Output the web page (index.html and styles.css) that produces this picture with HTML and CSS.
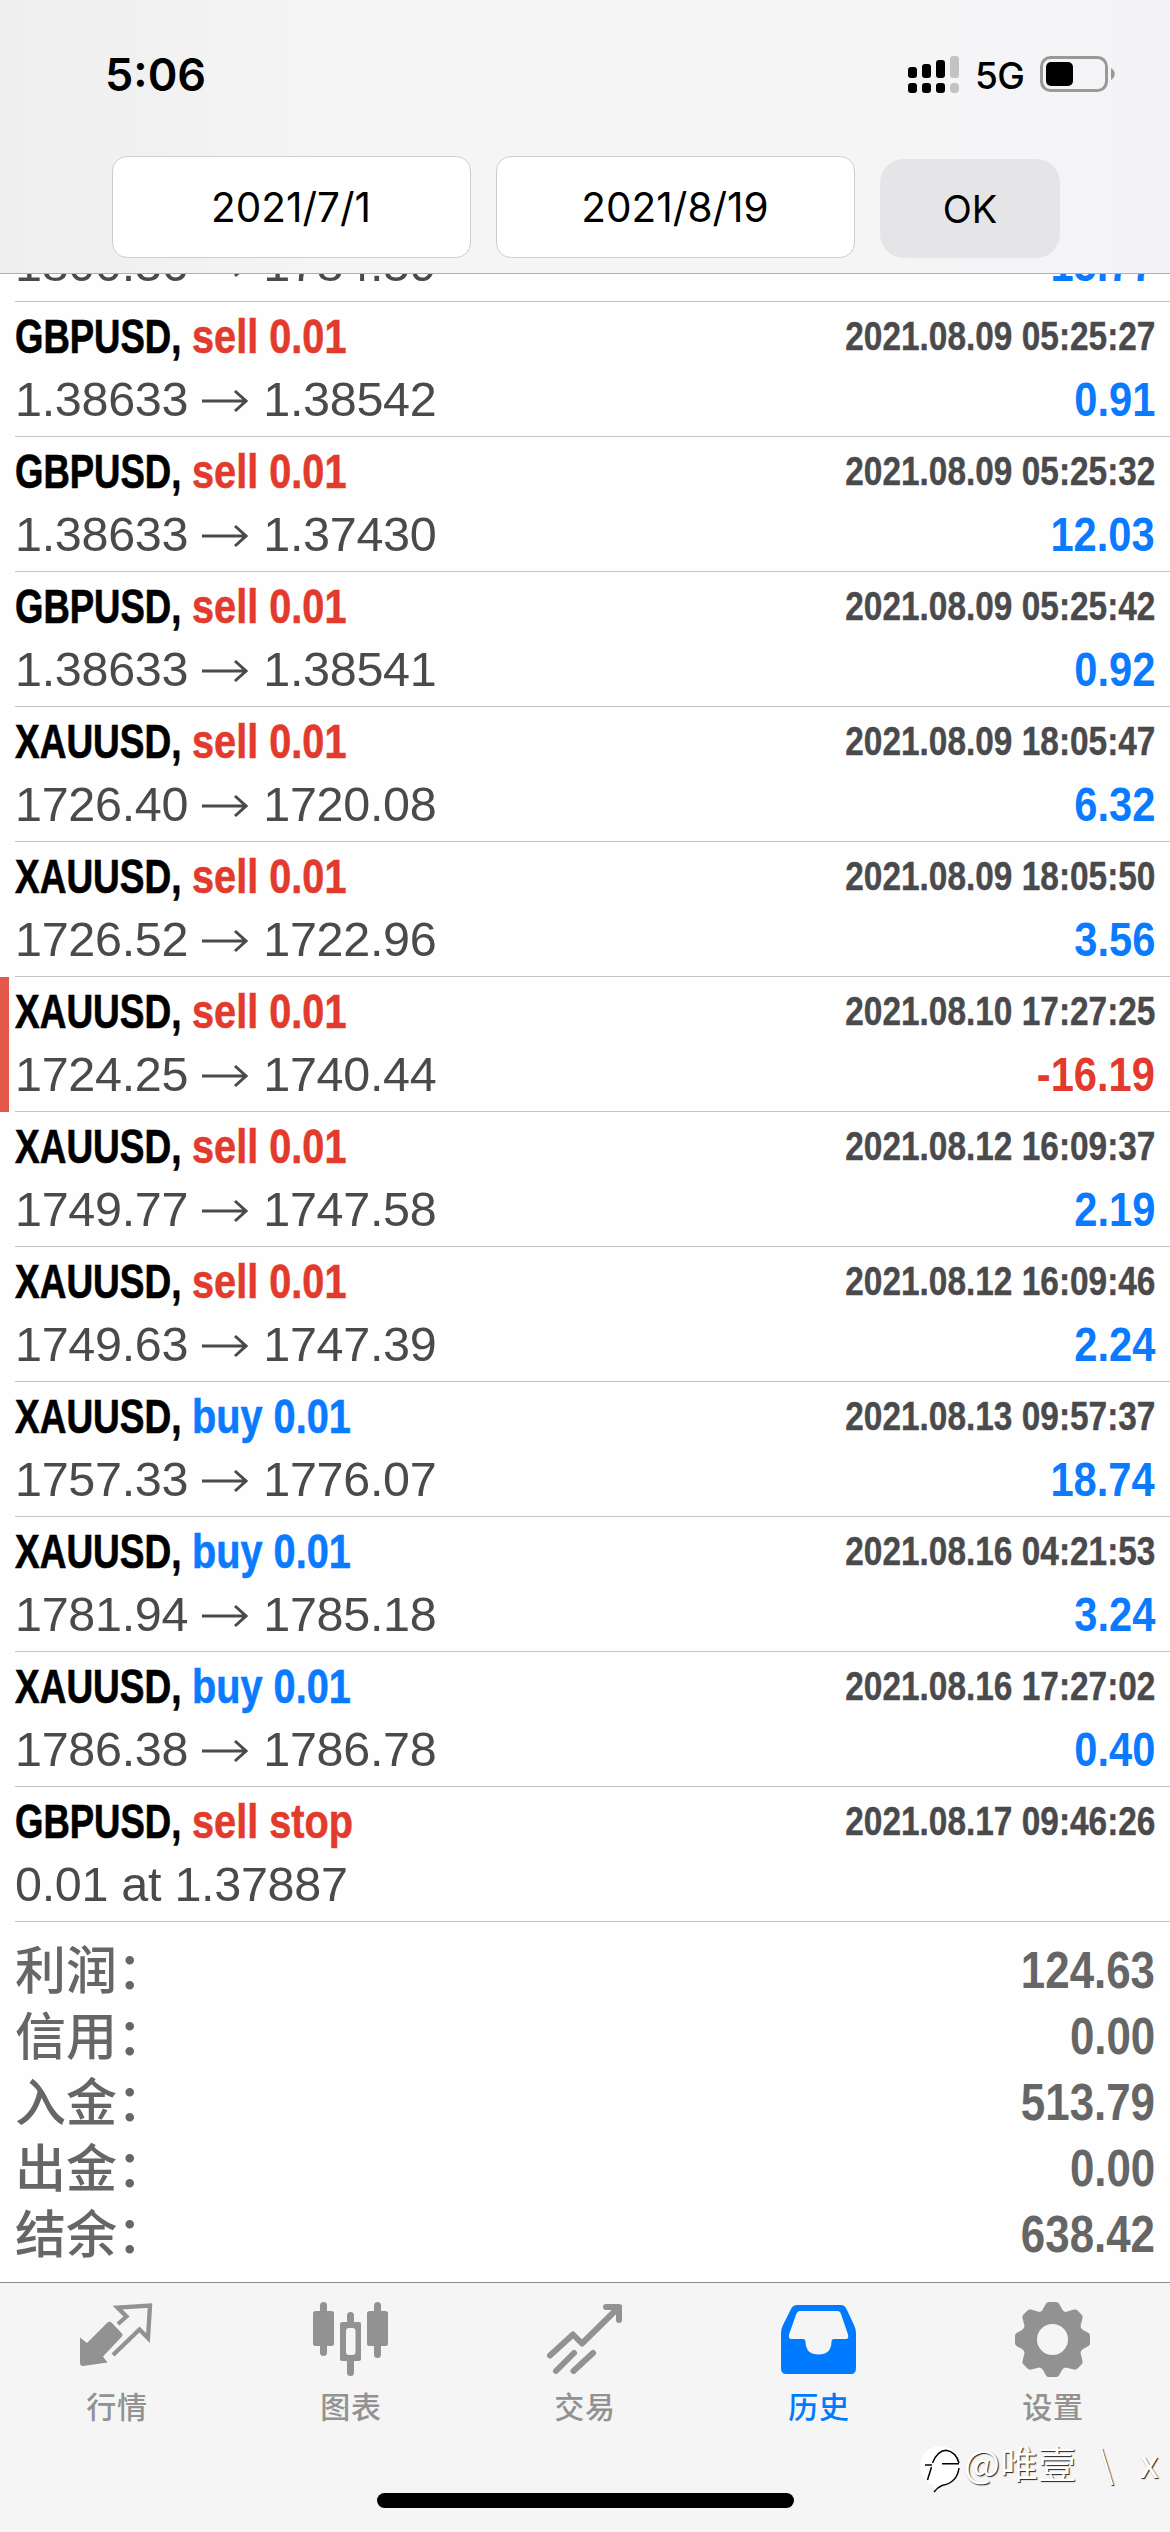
FILE: index.html
```html
<!DOCTYPE html>
<html lang="zh-CN">
<head>
<meta charset="utf-8">
<title>历史</title>
<link rel="stylesheet" href="styles.css">
</head>
<body>
<div class="screen">
  <header class="header">
    <div class="status">
      <span class="clock">5:06</span>
      <div class="status-icons">
        <svg class="signal" width="52" height="38" viewBox="0 0 52 38">
          <g fill="#000"><rect x="0" y="11" width="9" height="11" rx="3"/><rect x="14" y="8" width="9" height="14" rx="3"/><rect x="28" y="4" width="9" height="18" rx="3"/><rect x="0" y="27" width="9" height="10" rx="3"/><rect x="14" y="27" width="9" height="10" rx="3"/><rect x="28" y="27" width="9" height="10" rx="3"/></g>
          <g fill="#c3c3c3"><rect x="42" y="0" width="9" height="22" rx="3"/><rect x="42" y="27" width="9" height="10" rx="4"/></g>
        </svg>
        <span class="network">5G</span>
        <svg class="battery" width="76" height="38" viewBox="0 0 76 38">
          <rect x="1.5" y="1.5" width="65" height="33" rx="9" fill="none" stroke="#999" stroke-width="3"/>
          <rect x="6" y="6" width="27" height="24" rx="5" fill="#000"/>
          <path d="M71 12 C76 15 76 21 71 24 Z" fill="#999"/>
        </svg>
      </div>
    </div>
    <div class="filters">
      <div class="field">2021/7/1</div>
      <div class="field">2021/8/19</div>
      <div class="ok">OK</div>
    </div>
  </header>

  <main class="list">
    <div class="deal partial"><div class="deal-bottom"><span class="prices">1800.36<svg class="arrow" viewBox="0 0 46 24"><path d="M0 12H44M33 2L44 12L33 22"/></svg>1784.59</span><span class="profit">15.77</span></div></div>
    <div class="deal"><div class="deal-top"><span class="symbol">GBPUSD,</span><span class="side sell">sell 0.01</span><span class="time">2021.08.09 05:25:27</span></div><div class="deal-bottom"><span class="prices">1.38633<svg class="arrow" viewBox="0 0 46 24"><path d="M0 12H44M33 2L44 12L33 22"/></svg>1.38542</span><span class="profit">0.91</span></div></div>
    <div class="deal"><div class="deal-top"><span class="symbol">GBPUSD,</span><span class="side sell">sell 0.01</span><span class="time">2021.08.09 05:25:32</span></div><div class="deal-bottom"><span class="prices">1.38633<svg class="arrow" viewBox="0 0 46 24"><path d="M0 12H44M33 2L44 12L33 22"/></svg>1.37430</span><span class="profit">12.03</span></div></div>
    <div class="deal"><div class="deal-top"><span class="symbol">GBPUSD,</span><span class="side sell">sell 0.01</span><span class="time">2021.08.09 05:25:42</span></div><div class="deal-bottom"><span class="prices">1.38633<svg class="arrow" viewBox="0 0 46 24"><path d="M0 12H44M33 2L44 12L33 22"/></svg>1.38541</span><span class="profit">0.92</span></div></div>
    <div class="deal"><div class="deal-top"><span class="symbol xau">XAUUSD,</span><span class="side sell">sell 0.01</span><span class="time">2021.08.09 18:05:47</span></div><div class="deal-bottom"><span class="prices">1726.40<svg class="arrow" viewBox="0 0 46 24"><path d="M0 12H44M33 2L44 12L33 22"/></svg>1720.08</span><span class="profit">6.32</span></div></div>
    <div class="deal"><div class="deal-top"><span class="symbol xau">XAUUSD,</span><span class="side sell">sell 0.01</span><span class="time">2021.08.09 18:05:50</span></div><div class="deal-bottom"><span class="prices">1726.52<svg class="arrow" viewBox="0 0 46 24"><path d="M0 12H44M33 2L44 12L33 22"/></svg>1722.96</span><span class="profit">3.56</span></div></div>
    <div class="deal stopped"><div class="deal-top"><span class="symbol xau">XAUUSD,</span><span class="side sell">sell 0.01</span><span class="time">2021.08.10 17:27:25</span></div><div class="deal-bottom"><span class="prices">1724.25<svg class="arrow" viewBox="0 0 46 24"><path d="M0 12H44M33 2L44 12L33 22"/></svg>1740.44</span><span class="profit loss">-16.19</span></div></div>
    <div class="deal"><div class="deal-top"><span class="symbol xau">XAUUSD,</span><span class="side sell">sell 0.01</span><span class="time">2021.08.12 16:09:37</span></div><div class="deal-bottom"><span class="prices">1749.77<svg class="arrow" viewBox="0 0 46 24"><path d="M0 12H44M33 2L44 12L33 22"/></svg>1747.58</span><span class="profit">2.19</span></div></div>
    <div class="deal"><div class="deal-top"><span class="symbol xau">XAUUSD,</span><span class="side sell">sell 0.01</span><span class="time">2021.08.12 16:09:46</span></div><div class="deal-bottom"><span class="prices">1749.63<svg class="arrow" viewBox="0 0 46 24"><path d="M0 12H44M33 2L44 12L33 22"/></svg>1747.39</span><span class="profit">2.24</span></div></div>
    <div class="deal"><div class="deal-top"><span class="symbol xau">XAUUSD,</span><span class="side buy">buy 0.01</span><span class="time">2021.08.13 09:57:37</span></div><div class="deal-bottom"><span class="prices">1757.33<svg class="arrow" viewBox="0 0 46 24"><path d="M0 12H44M33 2L44 12L33 22"/></svg>1776.07</span><span class="profit">18.74</span></div></div>
    <div class="deal"><div class="deal-top"><span class="symbol xau">XAUUSD,</span><span class="side buy">buy 0.01</span><span class="time">2021.08.16 04:21:53</span></div><div class="deal-bottom"><span class="prices">1781.94<svg class="arrow" viewBox="0 0 46 24"><path d="M0 12H44M33 2L44 12L33 22"/></svg>1785.18</span><span class="profit">3.24</span></div></div>
    <div class="deal"><div class="deal-top"><span class="symbol xau">XAUUSD,</span><span class="side buy">buy 0.01</span><span class="time">2021.08.16 17:27:02</span></div><div class="deal-bottom"><span class="prices">1786.38<svg class="arrow" viewBox="0 0 46 24"><path d="M0 12H44M33 2L44 12L33 22"/></svg>1786.78</span><span class="profit">0.40</span></div></div>
    <div class="deal"><div class="deal-top"><span class="symbol">GBPUSD,</span><span class="side sell stop">sell stop</span><span class="time">2021.08.17 09:46:26</span></div><div class="deal-bottom"><span class="prices">0.01 at 1.37887</span></div></div>

    <div class="totals">
      <div class="total"><span class="label">利润：</span><span class="sum">124.63</span></div>
      <div class="total"><span class="label">信用：</span><span class="sum">0.00</span></div>
      <div class="total"><span class="label">入金：</span><span class="sum">513.79</span></div>
      <div class="total"><span class="label">出金：</span><span class="sum">0.00</span></div>
      <div class="total"><span class="label">结余：</span><span class="sum">638.42</span></div>
    </div>
  </main>

  <nav class="tabbar">
    <div class="tabs">
      <div class="tab">
        <svg class="icon" viewBox="0 0 76 76"><path d="M1 35.500L8 41L28.500 20.500Q30.500 19 32.500 20.500L42.500 31Q44.500 33 42.500 35L24 54.500L28.500 60.500L4 64Q1 64 1 61Z" fill="currentColor"/><path d="M39 22L47.500 14.500L38.500 5.500L71 3.500L69 36L60.500 27.500L34 53" fill="none" stroke="currentColor" stroke-width="4.300"/></svg>
        <span>行情</span>
      </div>
      <div class="tab">
        <svg class="icon" viewBox="0 0 76 76" fill="currentColor"><rect x="0" y="9" width="21" height="35" rx="2.500"/><rect x="7" y="0" width="7" height="54" rx="3.500"/><rect x="54" y="9" width="21" height="35" rx="2.500"/><rect x="61" y="0" width="7" height="56" rx="3.500"/><path fill-rule="evenodd" d="M29 20H46Q48 20 48 22V57Q48 59 46 59H29Q27 59 27 57V22Q27 20 29 20ZM36 26Q33 26 33 29V50Q33 53 36 53H39.500Q42.500 53 42.500 50V29Q42.500 26 39.500 26Z"/><path d="M34 21V13.500Q34 10 37.500 10Q41 10 41 13.500V21Z"/><rect x="34" y="55" width="7" height="19" rx="3.500"/></svg>
        <span>图表</span>
      </div>
      <div class="tab">
        <svg class="icon" viewBox="0 0 76 76" fill="none" stroke="currentColor" stroke-width="6" stroke-linecap="round" stroke-linejoin="round"><path d="M3 53.500L26 32.500L35 41.500L69 8M59 5H72V18"/><path d="M9 69L27 51M26.500 69L46 51"/><path d="M66 3H75V12Z" fill="currentColor" stroke="none"/></svg>
        <span>交易</span>
      </div>
      <div class="tab active">
        <svg class="icon" viewBox="0 0 76 76" fill="currentColor" fill-rule="evenodd"><path d="M16 3H60Q63.500 3 65.500 7L73 23Q75 27 75 31V66Q75 72 70 72H5Q0 72 0 66V31Q0 27 2 23L10 7Q12 3 16 3ZM18.500 9Q16.500 9 15.500 11.500L8 32.500Q7.500 37 10 37H22Q24.500 37 24.500 40Q25 52.500 37.500 52.500Q50 52.500 50.500 40Q50.500 37 53 37H65Q68 37 67 32.500L60 12Q59 9 56.500 9Z"/></svg>
        <span>历史</span>
      </div>
      <div class="tab">
        <svg class="icon" viewBox="0 0 76 76"><path fill="currentColor" fill-rule="evenodd" d="M31 1.500Q32 0 34 0H41Q43 0 44 1.500L47 7Q48 9.500 50.500 10L59 7.500Q61 7 62.500 8.500L66.500 12.500Q68 14 67.500 16L65.500 24Q65.500 26.500 68 28L73.500 31Q75 32 75 34V41Q75 43 73.500 44L68 47Q65.500 48.500 65.500 51L67.500 59Q68 61 66.500 62.500L62.500 66.500Q61 68 59 67.500L50.500 65.500Q48 66 47 68L44 73.500Q43 75 41 75H34Q32 75 31 73.500L28 68Q27 66 24.500 65.500L16 67.500Q14 68 12.500 66.500L8.500 62.500Q7 61 7.500 59L9.500 51Q9.500 48.500 7 47L1.500 44Q0 43 0 41V34Q0 32 1.500 31L7 28Q9.500 26.500 9.500 24L7.500 16Q7 14 8.500 12.500L12.500 8.500Q14 7 16 7.500L24.500 10Q27 9.500 28 7ZM37.500 22A15.500 15.500 0 1 0 37.500 53A15.500 15.500 0 1 0 37.500 22Z"/></svg>
        <span>设置</span>
      </div>
    </div>
    <div class="home"></div>
  </nav>

  <div class="watermark">
    <svg width="42" height="48" viewBox="0 0 42 48"><circle cx="20" cy="20" r="20" fill="#fff"/><path d="M14 35L23 22L38 20C38 34 24 38 14 45Z" fill="#fff"/><g fill="none" stroke="#000" stroke-width="1.500"><path d="M5 19H12M12.500 17Q17 5 26 4.300Q36 6 39 17M22 17.700H39M11.500 21L7.500 34M39 22Q37 37 22 39.500Q18 41 14 46"/></g></svg>
    <span>@唯壹</span><span class="slash">\</span><span>x</span>
  </div>
</div>
</body>
</html>
```
FILE: styles.css
```css
* { box-sizing: border-box; }
body { margin: 0; background: #fefefe; }
.screen {
  position: relative;
  display: flex;
  flex-direction: column;
  width: 1170px;
  height: 2532px;
  overflow: hidden;
  background: #fefefe;
  font-family: "Liberation Sans", "Noto Sans CJK SC", sans-serif;
  font-kerning: none;
}

/* header */
.header {
  flex: none;
  height: 274px;
  border-bottom: 1px solid #b0b0b2;
  background: linear-gradient(90deg, #f0eff0 0, #f2f1f1 140px, #f5f5f5 320px, #f5f5f6 900px, #f4f4f6 100%);
  font-family: Inter, sans-serif;
  color: #000;
}
.status {
  display: flex;
  justify-content: space-between;
  height: 156px;
  padding: 56px 54px 0 105px;
}
.clock { font-size: 45px; line-height: 38px; font-weight: 600; }
.status-icons { display: flex; height: 38px; }
.network { width: 65px; margin-left: 15px; font-size: 37px; line-height: 40px; font-weight: 500; letter-spacing: -.5px; }
.filters { display: flex; gap: 25px; padding-left: 112px; }
.field {
  display: flex;
  align-items: center;
  justify-content: center;
  width: 359px;
  height: 102px;
  border: 1px solid #cdcdcf;
  border-radius: 15px;
  background: #fff;
  font-size: 40.5px;
  padding: 1px 1px 0 0;
}
.ok {
  display: flex;
  align-items: center;
  justify-content: center;
  width: 180px;
  height: 99px;
  margin-top: 3px;
  border-radius: 24px;
  background: #e5e5e7;
  font-size: 38px;
}

/* history rows */
.list { flex: none; height: 2008px; overflow: hidden; }
.deal {
  display: flex;
  flex-direction: column;
  height: 135px;
  padding: 0 15px;
  background: linear-gradient(#c4c4c6, #c4c4c6) 15px 100% / 1155px 1px no-repeat;
}
.deal.partial { height: 28px; justify-content: flex-end; }
.deal.stopped { border-left: 9px solid #e2594b; padding-left: 6px; background-position: 6px 100%; }
.deal-top { display: flex; height: 68px; line-height: 68px; font-weight: 700; font-size: 49px; white-space: nowrap; }
.symbol, .side, .prices { flex: none; transform-origin: 0 50%; }
.symbol { width: 177px; transform: scaleX(.745); -webkit-text-stroke: .7px currentColor; }
.symbol.xau { transform: scaleX(.755); }
.side { width: 160px; transform: scaleX(.81); -webkit-text-stroke: .6px currentColor; }
.sell { color: #e23a2c; }
.buy { color: #0a7aff; }
.time { margin-left: auto; font-size: 40px; color: #4a4a4c; transform: scaleX(.835); transform-origin: 100% 50%; -webkit-text-stroke: .4px currentColor; }
.deal-bottom { display: flex; justify-content: space-between; flex: none; height: 67px; line-height: 58px; font-size: 49px; white-space: nowrap; }
.prices { color: #4a4a4c; font-size: 48.5px; letter-spacing: -.3px; }
.arrow { width: 46px; height: 24px; margin: 0 15px 3px 14px; fill: none; stroke: #4a4a4c; stroke-width: 3; }
.profit { font-weight: 700; color: #0a7aff; transform: scaleX(.85); transform-origin: 100% 50%; }
.profit.loss { color: #e23a2c; }

/* totals */
.totals { padding: 15px 15px 0; color: #666; }
.total { display: flex; justify-content: space-between; height: 66px; line-height: 66px; }
.label { height: 62px; line-height: 60px; font-family: "Noto Sans CJK SC", sans-serif; font-size: 51px; font-weight: 500; }
.sum { font-size: 51px; line-height: 67px; font-weight: 700; transform: scaleX(.86); transform-origin: 100% 50%; }

/* tab bar */
.tabbar {
  display: flex;
  flex-direction: column;
  align-items: center;
  height: 250px;
  border-top: 1px solid #8e8e90;
  background: #f5f5f5;
}
.tabs { display: grid; grid-template-columns: repeat(5, 234px); height: 210px; padding-top: 19px; }
.tab { display: flex; flex-direction: column; align-items: center; color: #929292; }
.tab span { margin-top: 5px; font: 500 30px/44px "Noto Sans CJK SC", sans-serif; letter-spacing: .7px; }
.icon { width: 76px; height: 76px; }
.tab.active { color: #007aff; }
.home { width: 417px; height: 15px; border-radius: 8px; background: #000; }

/* author mark laid over the tab bar */
.watermark {
  position: absolute;
  left: 920px;
  top: 2446px;
  display: flex;
  color: #fff;
  font: 400 38px/32px "Noto Sans CJK SC", sans-serif;
  text-shadow: 1px 1px 1px #222;
  white-space: nowrap;
}
.watermark svg { margin-right: 2px; }
.watermark .slash { margin: 0 26px 0 23px; }
```
